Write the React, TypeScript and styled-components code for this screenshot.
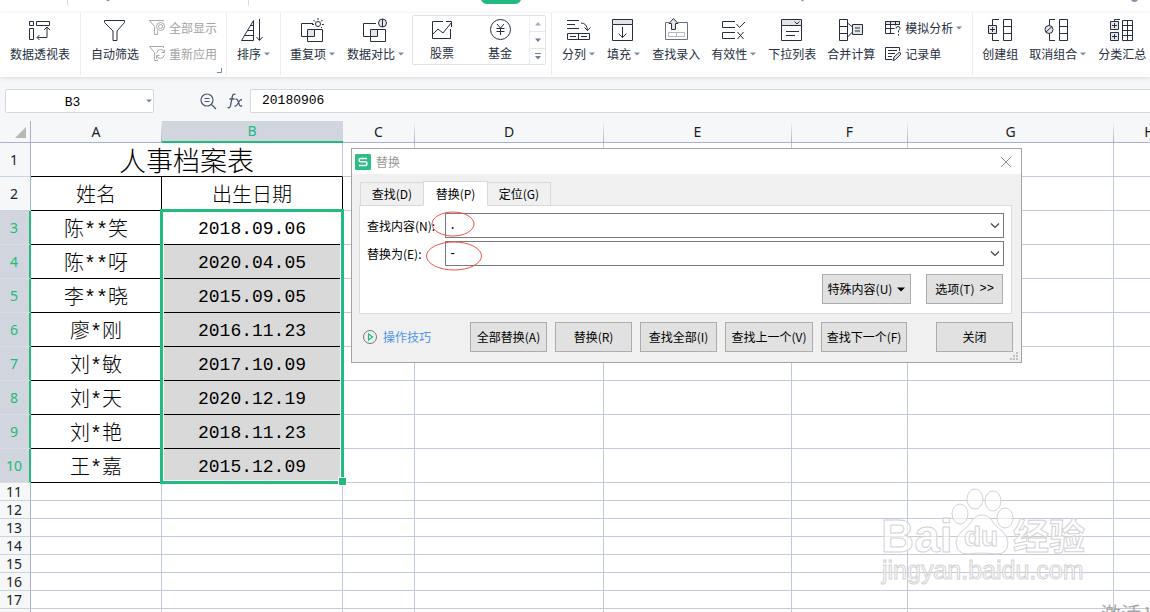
import React from "react";
import styled, { createGlobalStyle, css } from "styled-components";

const ui = `"Noto Sans CJK SC", "Noto Sans", sans-serif`;
const song = `"Liberation Mono", "Noto Sans CJK SC", monospace`;
const green = "#21ba7f";
const ink = "#262f40";
const gridLine = "#c3c9dd";
const headLine = "#a9b2cc";

const GlobalStyle = createGlobalStyle`
  * { box-sizing: border-box; }
  body { margin: 0; background: #fff; font: 12px/16px ${ui}; color: ${ink}; overflow: hidden; }
  button, input { font: inherit; color: inherit; margin: 0; padding: 0; }
  svg { display: block; overflow: visible; flex: none; }
`;

const Page = styled.div`
  position: relative;
  display: flex;
  flex-direction: column;
  height: 100vh;
  overflow: hidden;
`;

/* ---------- ribbon ---------- */

const TabStrip = styled.div`
  flex: none;
  height: 13px;
  background: #fff;
`;

const Ribbon = styled.div`
  flex: none;
  display: flex;
  height: 64px;
  padding-bottom: 2px;
  background: #fff;
  position: relative;
  z-index: 1;
  box-shadow: 0 1px 4px #d9dbde;
`;

const Group = styled.div<{ $gallery?: boolean; $open?: boolean }>`
  position: relative;
  flex: none;
  display: flex;
  gap: 11px;
  padding: ${(p) => (p.$gallery ? "2px 5px 0 7px" : p.$open ? "5px 0 0 9px" : "5px 9px 0 10px")};
  border-right: ${(p) => (p.$open ? "0" : "1px solid #ebedf0")};
  &:first-child { padding-right: 10px; }
`;

const ToolButton = styled.button<{ $wide?: boolean }>`
  flex: none;
  display: flex;
  flex-direction: column;
  align-items: center;
  gap: 4px;
  width: ${(p) => (p.$wide ? "58px" : "auto")};
  border: 0;
  background: none;
  height: 44px;
  white-space: nowrap;
`;

const ToolLabel = styled.span`
  display: flex;
  align-items: center;
`;

const Stack = styled.div`
  display: flex;
  flex-direction: column;
  gap: 10px;
  padding-top: 2px;
  margin-left: -1px;
`;

const SmallButton = styled.button<{ $off?: boolean }>`
  display: flex;
  align-items: center;
  gap: 4px;
  height: 16px;
  border: 0;
  background: none;
  white-space: nowrap;
  color: ${(p) => (p.$off ? "#a3a3a3" : ink)};
`;

const Corner = styled.svg`
  position: absolute;
  right: 4px;
  bottom: 2px;
`;

const Gallery = styled.div`
  display: flex;
  height: 50px;
  border: 1px solid #dfe2ea;
  border-radius: 2px;
`;

const GalleryItems = styled.div`
  display: flex;
  padding-top: 1px;
`;

const Scroller = styled.div`
  display: flex;
  flex-direction: column;
  width: 16px;
  border-left: 1px solid #eceef2;
`;

const ScrollButton = styled.button`
  flex: 1;
  display: flex;
  align-items: center;
  justify-content: center;
  border: 0;
  background: none;
  & + & { border-top: 1px solid #e4e6ec; }
`;

const CaretSvg = styled.svg`
  margin-left: 3px;
  margin-right: 1px;
`;

const Caret = () => (
  <CaretSvg width="6" height="4" viewBox="0 0 6 4">
    <path d="M0 0.5H6L3 3.5Z" fill="#7c8aa5" />
  </CaretSvg>
);

const Ico = ({ children, size = 24, color = ink }: { children: React.ReactNode; size?: number; color?: string }) => (
  <svg width={size} height={size} viewBox={`0 0 ${size} ${size}`} fill="none" stroke={color} strokeWidth="1">
    {children}
  </svg>
);

const shade = "#e3e5e9";

const icons = {
  pivot: (
    <Ico>
      <path d="M1.5 3.5h4v4h-4zM8.5 3.5h13v4h-13zM1.5 10.5h4v11h-4z" />
      <path d="M9.5 19.5h9.5v-10M11.5 17l-2.5 2.5 2.5 2.5M16 12l3-3 3 3" />
    </Ico>
  ),
  funnel: (
    <Ico>
      <path d="M1.5 2.5h20v2l-7.500 8.500v9.500h-4v-9.500L1.500 4.500z" />
    </Ico>
  ),
  sort: (
    <Ico>
      <path d="M11.500 2.500L-.5 22.500h12zM8.500 7.500h3M5.500 12.500h6M2.500 17.500h9M17.500 1v21M14.500 19l3 3.500 3-3.500" />
    </Ico>
  ),
  duplicate: (
    <Ico>
      <path d="M6.500 11.500h7v7h-7z" fill={shade} stroke="none" />
      <path d="M12 5.500H.5v13h13V11M6.500 11.500h15v12h-15z" />
      <circle cx="17" cy="6" r="2.500" />
      <path d="M17 0v2M12.500 2l1.500 1.500M21.500 2L20 3.500M11 6.500h2M21 6.500h2M20 9l1 1" />
    </Ico>
  ),
  compare: (
    <Ico>
      <path d="M6.500 11.500h7v7h-7z" fill={shade} stroke="none" />
      <path d="M12 5.500H-.5v13h14V11M6.500 11.500h15v12h-15z" />
      <circle cx="18.500" cy="5" r="4" fill={shade} />
      <path d="M18.500 1v8" />
    </Ico>
  ),
  stock: (
    <Ico>
      <path d="M13 4.500H2.500v17h18V12" />
      <path d="M3 17l5-5 5 4L21.500 5.500M16 4.500h5.500V10" />
    </Ico>
  ),
  fund: (
    <Ico>
      <circle cx="12.500" cy="12.500" r="10" />
      <path d="M9 7l3.500 4L16 7M12.500 11v7M8.500 11.500h8M8.500 14.500h8" />
    </Ico>
  ),
  split: (
    <Ico>
      <path d="M0 2.500h12M0 6.500h8M0 10.500h12M.5 15.500h22v6H.5zM11.500 15.500v6M3 18.500h6M14 18.500h6" />
      <path d="M14 5q6 0 6.500 7.500M17.500 9.500l3 3 3-3" />
    </Ico>
  ),
  fill: (
    <Ico>
      <path d="M.5 1.500h20v5H.5z" fill={shade} />
      <path d="M.5 6.500v16h20v-16M10.500 9v10.500M6.500 15.500l4 4 4-4" />
    </Ico>
  ),
  lookup: (
    <Ico>
      <path d="M5 4.500H1.500v17h22v-17H14" stroke="#6c7280" />
      <path d="M4.500 14.500h16v4h-16zM12.500 14.500v4" stroke="#b4b8bf" />
      <path d="M9.500 .5L14 5.500h-2.500v6h-4v-6H5z" fill={shade} />
    </Ico>
  ),
  valid: (
    <Ico>
      <path d="M13 3.500H.5v6H13M13 14.500H.5v6H13" />
      <path d="M14.500 6l3 3.500L23 4M15.500 14l6 7M21.500 14l-6 7" />
    </Ico>
  ),
  list: (
    <Ico>
      <path d="M1.500 1.500h20v6h-20z" fill={shade} />
      <path d="M1.500 7.500v15h20v-15M14.500 3.500l2.500 2.500 2.500-2.500M6 13.500h13M6 17.500h9" />
    </Ico>
  ),
  consolidate: (
    <Ico>
      <path d="M.5 1.500h8v21h-8zM.5 8.500h8M.5 15.500h8M8.500 5l5 4M8.500 19l5-5" />
      <path d="M13.500 6.500h10v10h-10z" fill={shade} />
      <path d="M16 10h5M16 13h5" />
    </Ico>
  ),
  group: (
    <Ico>
      <path d="M11 1.500H4.500V7M4.500 15v7.500H11M15.500 1.500h8v21h-8zM15.500 8.500h8M15.500 15.500h8" />
      <path d="M.5 7.500h8v8h-8z" fill={shade} />
      <path d="M4.500 9v5M2 11.500h5" />
    </Ico>
  ),
  ungroup: (
    <Ico>
      <path d="M9 1.500H3.500V7M3.500 15v7.500H9M13.500 1.500h8v21h-8zM13.500 8.500h8M13.500 15.500h8" />
      <circle cx="3" cy="11.500" r="4" fill={shade} />
      <path d="M0 14l6-5.500" />
    </Ico>
  ),
  subtotal: (
    <Ico>
      <path d="M10 1.500H4.500V4M12.500 2.500h10v20h-10zM17.500 2.500v20M12.500 7.500h10M12.500 12.500h10M12.500 17.500h10" />
      <path d="M.5 3.500h8v8h-8zM.5 14.500h8v8h-8z" fill={shade} />
      <path d="M4.500 5v5M2 7.500h5M4.500 16v5M2 18.500h5" />
    </Ico>
  ),
  showAll: (
    <Ico size={16} color="#a9a9a9">
      <path d="M10 .5H.5L5.500 6.500v8h3v-4M.5 .5h14v1" />
      <circle cx="11.500" cy="6.500" r="4" fill="#fff" />
      <circle cx="11.500" cy="6.500" r="2" />
    </Ico>
  ),
  reapply: (
    <Ico size={16} color="#a9a9a9">
      <path d="M14.500 2V.5H.5L5.500 6.500v8h3v-1" />
      <path d="M7.500 7.500q1-4 4-4t4 3M15.500 3.500v3h-3M15.500 8.500q-1 4-4 4t-4-3M7.500 12.500v-3h3" />
    </Ico>
  ),
  whatIf: (
    <Ico size={16}>
      <path d="M.5 1.500h14v3H.5z" fill={shade} />
      <path d="M9.500 13.500h-9v-12M.5 8.500h9M5.500 1.500v12M10.500 1.500v4M14.500 1.500V5" />
      <path d="M11 8.500q0-2 2-2t2 2q0 1-1.500 2v2M13.500 14v1.500" />
    </Ico>
  ),
  form: (
    <Ico size={16}>
      <path d="M14.500 5V1.500H.5v12H7M3 4.500h9M3 7.500h7M3 10.500h4" />
      <path d="M8 14.500l1-3.500 5.500-5 1.500 2-5.500 5.500z" fill={shade} />
    </Ico>
  ),
};

type IconName = keyof typeof icons;

const Tool = ({ icon, label, menu, wide }: { icon: IconName; label: string; menu?: boolean; wide?: boolean }) => (
  <ToolButton type="button" $wide={wide}>
    {icons[icon]}
    <ToolLabel>
      {label}
      {menu && <Caret />}
    </ToolLabel>
  </ToolButton>
);

const SmallTool = ({ icon, label, menu, off }: { icon: IconName; label: string; menu?: boolean; off?: boolean }) => (
  <SmallButton type="button" $off={off} disabled={off}>
    {icons[icon]}
    <ToolLabel>
      {label}
      {menu && <Caret />}
    </ToolLabel>
  </SmallButton>
);

/* ---------- formula bar ---------- */

const FormulaBar = styled.div`
  flex: none;
  display: flex;
  align-items: flex-start;
  height: 44px;
  padding: 12px 0 0 5px;
  background: #f5f7f9;
`;

const NameBox = styled.div`
  flex: none;
  display: flex;
  align-items: center;
  width: 149px;
  height: 24px;
  background: #fff;
  border: 1px solid #d5d8e0;
  border-radius: 2px;
`;

const CellInput = styled.input`
  flex: 1;
  min-width: 0;
  border: 0;
  outline: 0;
  background: none;
  color: #000;
  font: 13px/20px ${song};
`;

const NameInput = styled(CellInput)`
  padding: 3px 4px 0 0;
  text-align: center;
`;

const BareButton = styled.button`
  display: flex;
  align-items: center;
  border: 0;
  background: none;
`;

const FxTools = styled.div`
  flex: none;
  display: flex;
  align-items: center;
  gap: 10px;
  height: 24px;
  width: 96px;
  padding-left: 46px;
`;

const FormulaField = styled.div`
  flex: 1;
  display: flex;
  height: 24px;
  padding-left: 11px;
  background: #fff;
  border: 1px solid #d5d8e0;
  border-right: 0;
  border-radius: 2px 0 0 2px;
`;

/* ---------- sheet ---------- */

const Sheet = styled.table`
  flex: none;
  table-layout: fixed;
  width: 100%;
  min-width: 1186px;
  border-collapse: separate;
  border-spacing: 0;
`;

const headBase = css`
  padding: 0;
  font: 14px/16px "Noto Sans", sans-serif;
  text-align: center;
  color: #1b1f27;
`;

const ColHead = styled.th<{ $on?: boolean }>`
  ${headBase}
  padding-right: 1px;
  height: 22px;
  background: ${(p) => (p.$on ? "#d1d5dd" : `linear-gradient(to bottom, #f5f7f9, ${headLine}) right / 1px 100% no-repeat #f5f7f9`)};
  border-bottom: ${(p) => (p.$on ? `2px solid ${green}` : `1px solid ${headLine}`)};
  color: ${(p) => (p.$on ? green : "#1b1f27")};
`;

const CornerHead = styled.th`
  height: 22px;
  padding: 0 4px 4px 0;
  vertical-align: bottom;
  background: #f5f7f9;
  border-right: 1px solid ${headLine};
  border-bottom: 1px solid ${headLine};
  svg { margin-left: auto; }
`;

const RowHead = styled.th<{ $on?: boolean }>`
  ${headBase}
  padding-right: ${(p) => (p.$on ? "1px" : "2px")};
  background: ${(p) => (p.$on ? "#d1d5dd" : "#f5f7f9")};
  color: ${(p) => (p.$on ? green : "#1b1f27")};
  border-right: ${(p) => (p.$on ? `2px solid ${green}` : `1px solid ${headLine}`)};
  border-bottom: 1px solid ${(p) => (p.$on ? "#dadde6" : "#ccd2e0")};
`;

const Row = styled.tr<{ $tall?: boolean }>`
  height: ${(p) => (p.$tall ? "34px" : "18px")};
`;

const cellText = {
  title: css`padding-top: 8px; font-size: 27px; line-height: 24px;`,
  text: css`padding-top: 6px; font-size: 20px; line-height: 24px;`,
  date: css`padding-top: 2px; font-size: 18px; line-height: 24px;`,
};

const Cell = styled.td<{ $kind?: "title" | "text" | "date"; $sel?: boolean }>`
  padding: 0;
  position: ${(p) => (p.$kind === "date" ? "relative" : "static")};
  border-right: 1px solid ${(p) => (p.$kind && p.$kind !== "title" ? "#000" : gridLine)};
  border-bottom: 1px solid ${(p) => (p.$kind ? "#000" : gridLine)};
  background: ${(p) => (p.$sel ? "#d9d9d9" : "#fff")};
  color: #000;
  text-align: center;
  font-family: ${song};
  font-weight: 300;
  ${(p) => p.$kind && cellText[p.$kind]}
`;

const Selection = styled.div`
  position: absolute;
  z-index: 1;
  top: -2px;
  left: -2px;
  right: -2px;
  height: 275px;
  border: 3px solid ${green};
  box-shadow: inset 0 0 0 1px #fff;
  pointer-events: none;
  &::after {
    content: "";
    position: absolute;
    right: -6px;
    bottom: -5px;
    width: 7px;
    height: 7px;
    border: 1px solid #fff;
    background: ${green};
  }
`;

const people: [string, string][] = [
  ["陈**笑", "2018.09.06"],
  ["陈**呀", "2020.04.05"],
  ["李**晓", "2015.09.05"],
  ["廖*刚", "2016.11.23"],
  ["刘*敏", "2017.10.09"],
  ["刘*天", "2020.12.19"],
  ["刘*艳", "2018.11.23"],
  ["王*嘉", "2015.12.09"],
];

const Blank = ({ from }: { from: number }) => (
  <>
    {Array.from({ length: 8 - from }, (_, i) => (
      <Cell key={i} />
    ))}
  </>
);

/* ---------- replace dialog ---------- */

const Dialog = styled.section`
  position: absolute;
  z-index: 3;
  left: 351px;
  top: 148px;
  width: 671px;
  background: #f0f0f0;
  border: 1px solid #a3a3a3;
  color: #000;
`;

const TitleBar = styled.header`
  display: flex;
  align-items: center;
  gap: 5px;
  height: 25px;
  padding: 0 9px 0 3px;
  background: #fff;
  color: #999;
`;

const Spacer = styled.span`
  flex: 1;
`;

const Tabs = styled.div`
  display: flex;
  align-items: flex-end;
  padding: 7px 0 0 8px;
  position: relative;
  z-index: 1;
  margin-bottom: -1px;
`;

const Tab = styled.button<{ $active?: boolean }>`
  width: ${(p) => (p.$active ? "65px" : "63px")};
  height: ${(p) => (p.$active ? "25px" : "24px")};
  background: ${(p) => (p.$active ? "#fff" : "#f0f0f0")};
  border: 1px solid #d9d9d9;
  border-bottom-color: ${(p) => (p.$active ? "#fff" : "#d9d9d9")};
  ${(p) => !p.$active && css`&:first-child { border-right: 0; } &:last-child { border-left: 0; }`}
`;

const Panel = styled.div`
  margin: 0 9px 0 7px;
  padding: 7px 7px 9px 7px;
  background: #fff;
  border: 1px solid #dcdcdc;
`;

const Field = styled.div`
  display: flex;
  align-items: center;
  margin-bottom: 3px;
  label { width: 78px; flex: none; white-space: nowrap; }
`;

const Combo = styled.div`
  flex: 1;
  display: flex;
  align-items: center;
  height: 25px;
  padding: 0 3px;
  border: 1px solid #7a7a7a;
  background: #fff;
`;

const ComboInput = styled.input`
  flex: 1;
  min-width: 0;
  border: 0;
  outline: 0;
  background: none;
  font-family: ${song};
`;

const Actions = styled.div`
  display: flex;
  justify-content: flex-end;
  gap: 15px;
  padding: 5px 1px 0 0;
`;

const Footer = styled.footer`
  display: flex;
  align-items: center;
  padding: 8px 8px 10px 11px;
  gap: 8px;
`;

const PushButton = styled.button<{ $w: number }>`
  display: flex;
  align-items: center;
  justify-content: center;
  gap: 5px;
  width: ${(p) => p.$w}px;
  height: 30px;
  background: #e1e1e1;
  border: 1px solid #adadad;
  white-space: nowrap;
`;

const Arrows = styled.span`
  font-family: ${song};
`;

const TipsLink = styled.a`
  display: flex;
  align-items: center;
  gap: 6px;
  color: #4d94ee;
  text-decoration: none;
`;

const CloseGap = styled.span`
  width: 13px;
`;

const Grip = styled.svg`
  position: absolute;
  right: 3px;
  bottom: 2px;
`;

const Marks = styled.svg`
  position: absolute;
  z-index: 2;
  left: 70px;
  top: 60px;
  pointer-events: none;
`;

const Chevron = () => (
  <BareButton type="button" aria-label="▾">
    <svg width="10" height="6" viewBox="0 0 10 6" fill="none" stroke="#444" strokeWidth="1.200">
      <path d="M1 .5l4 4 4-4" />
    </svg>
  </BareButton>
);

/* ---------- overlays ---------- */

const TopMarks = styled.svg`
  position: absolute;
  left: 0;
  top: 0;
`;

const Watermark = styled.svg`
  position: absolute;
  z-index: 2;
  left: 860px;
  top: 470px;
  pointer-events: none;
`;

const Activate = styled.div`
  position: absolute;
  z-index: 2;
  left: 1101px;
  top: 602px;
  font-size: 20px;
  line-height: 24px;
  color: #a8a8a8;
  white-space: nowrap;
`;

export default function App() {
  return (
    <Page>
      <GlobalStyle />
      <TabStrip />
      <TopMarks width="1150" height="6" viewBox="0 0 1150 6">
        <path d="M67.500 0v5.500M248.500 0v5.500" stroke="#d6d9e0" />
        <path d="M481 0h40q-2 4-6 4h-28q-4 0-6-4z" fill={green} />
        <path d="M106 0h4l-2 1.500zM801 0h3l-1.500 1.500zM1131 0h7q-1 2-3.500 2t-3.500-2z" fill="#8590ab" />
      </TopMarks>

      <Ribbon>
        <Group>
          <Tool icon="pivot" label="数据透视表" />
        </Group>
        <Group>
          <Tool icon="funnel" label="自动筛选" />
          <Stack>
            <SmallTool icon="showAll" label="全部显示" off />
            <SmallTool icon="reapply" label="重新应用" off />
          </Stack>
          <Corner width="5" height="5" viewBox="0 0 5 5" fill="none" stroke="#7c8aa5">
            <path d="M4.500 0v4.500H0" />
          </Corner>
        </Group>
        <Group>
          <Tool icon="sort" label="排序" menu />
        </Group>
        <Group $open>
          <Tool icon="duplicate" label="重复项" menu />
          <Tool icon="compare" label="数据对比" menu />
        </Group>
        <Group $gallery>
          <Gallery>
            <GalleryItems>
              <Tool icon="stock" label="股票" wide />
              <Tool icon="fund" label="基金" wide />
            </GalleryItems>
            <Scroller>
              <ScrollButton type="button">
                <svg width="6" height="4" viewBox="0 0 6 4"><path d="M0 3.500H6L3 0Z" fill="#a5aec2" /></svg>
              </ScrollButton>
              <ScrollButton type="button">
                <svg width="6" height="4" viewBox="0 0 6 4"><path d="M0 .5H6L3 4Z" fill="#6f7d9b" /></svg>
              </ScrollButton>
              <ScrollButton type="button">
                <svg width="6" height="7" viewBox="0 0 6 7"><path d="M0 0h6v1H0zM0 3H6L3 6.500Z" fill="#6f7d9b" /></svg>
              </ScrollButton>
            </Scroller>
          </Gallery>
        </Group>
        <Group>
          <Tool icon="split" label="分列" menu />
          <Tool icon="fill" label="填充" menu />
          <Tool icon="lookup" label="查找录入" />
          <Tool icon="valid" label="有效性" menu />
          <Tool icon="list" label="下拉列表" />
          <Tool icon="consolidate" label="合并计算" />
          <Stack>
            <SmallTool icon="whatIf" label="模拟分析" menu />
            <SmallTool icon="form" label="记录单" />
          </Stack>
        </Group>
        <Group $open>
          <Tool icon="group" label="创建组" />
          <Tool icon="ungroup" label="取消组合" menu />
          <Tool icon="subtotal" label="分类汇总" />
        </Group>
      </Ribbon>

      <FormulaBar>
        <NameBox>
          <NameInput defaultValue="B3" aria-label="B3" />
          <BareButton type="button"><Caret /></BareButton>
        </NameBox>
        <FxTools>
          <BareButton type="button">
            <svg width="17" height="17" viewBox="0 0 17 17" fill="none" stroke="#4a5670" strokeWidth="1.200">
              <circle cx="7" cy="7" r="6" />
              <path d="M11.500 11.500l4.500 4.500M4.500 5.500h5M4.500 8.500h5" />
            </svg>
          </BareButton>
          <BareButton type="button">
            <svg width="16" height="16" viewBox="0 0 16 16" fill="none" stroke="#4a5670" strokeWidth="1.300">
              <path d="M8.500 1.500Q6 0 5.200 4L3.500 12.500Q3 15.500 .5 14.500M2.500 6h5" />
              <path d="M8.500 6.500q1.500-1 2.300 1l1.700 4.500q1 2 2.500.5M15 6.500q-1.500 0-2.500 1.500L10 12q-1 1.500-2.500 1" />
            </svg>
          </BareButton>
        </FxTools>
        <FormulaField>
          <CellInput defaultValue="20180906" aria-label="fx" />
        </FormulaField>
      </FormulaBar>

      <Sheet>
        <colgroup>
          {[31, 131, 181, 72, 189, 188, 116, 206].map((w, i) => (
            <col key={i} width={w} />
          ))}
          <col />
        </colgroup>
        <thead>
          <tr>
            <CornerHead>
              <svg width="11" height="11" viewBox="0 0 11 11"><path d="M11 0v11H0z" fill="#b8b8b8" /></svg>
            </CornerHead>
            {["A", "B", "C", "D", "E", "F", "G", "H"].map((c) => (
              <ColHead key={c} scope="col" $on={c === "B"}>{c}</ColHead>
            ))}
          </tr>
        </thead>
        <tbody>
          <Row $tall>
            <RowHead scope="row">1</RowHead>
            <Cell $kind="title" colSpan={2}>人事档案表</Cell>
            <Blank from={2} />
          </Row>
          <Row $tall>
            <RowHead scope="row">2</RowHead>
            <Cell $kind="text">姓名</Cell>
            <Cell $kind="text">出生日期</Cell>
            <Blank from={2} />
          </Row>
          {people.map(([name, date], i) => (
            <Row $tall key={i}>
              <RowHead scope="row" $on>{i + 3}</RowHead>
              <Cell $kind="text">{name}</Cell>
              <Cell $kind="date" $sel={i > 0}>
                {date}
                {i === 0 && <Selection />}
              </Cell>
              <Blank from={2} />
            </Row>
          ))}
          {[11, 12, 13, 14, 15, 16, 17].map((n) => (
            <Row key={n}>
              <RowHead scope="row">{n}</RowHead>
              <Blank from={0} />
            </Row>
          ))}
          <Row>
            <RowHead scope="row" />
            <Blank from={0} />
          </Row>
        </tbody>
      </Sheet>

      <Dialog role="dialog" aria-label="替换">
        <TitleBar>
          <svg width="16" height="16" viewBox="0 0 16 16">
            <rect width="16" height="16" rx="1" fill="#2bbf86" />
            <path d="M12 4.500H5.500q-1.500 0-1.500 1.500t1.500 1.800h5q1.500.2 1.500 1.900t-1.500 1.800H4" fill="none" stroke="#fff" strokeWidth="1.500" />
          </svg>
          <span>替换</span>
          <Spacer />
          <BareButton type="button" aria-label="关闭">
            <svg width="12" height="12" viewBox="0 0 12 12" stroke="#8c8c8c"><path d="M1 1l10 10M11 1L1 11" /></svg>
          </BareButton>
        </TitleBar>
        <Tabs role="tablist">
          <Tab type="button" role="tab">查找(D)</Tab>
          <Tab type="button" role="tab" $active>替换(P)</Tab>
          <Tab type="button" role="tab">定位(G)</Tab>
        </Tabs>
        <Panel>
          <Field>
            <label htmlFor="find">查找内容(N):</label>
            <Combo>
              <ComboInput id="find" defaultValue="." />
              <Chevron />
            </Combo>
          </Field>
          <Field>
            <label htmlFor="replace">替换为(E):</label>
            <Combo>
              <ComboInput id="replace" defaultValue="-" />
              <Chevron />
            </Combo>
          </Field>
          <Actions>
            <PushButton type="button" $w={89}>
              特殊内容(U)
              <svg width="8" height="5" viewBox="0 0 8 5"><path d="M0 .5h8L4 4.500z" /></svg>
            </PushButton>
            <PushButton type="button" $w={77}>选项(T) <Arrows>&gt;&gt;</Arrows></PushButton>
          </Actions>
        </Panel>
        <Footer>
          <TipsLink href="#">
            <svg width="14" height="14" viewBox="0 0 14 14" fill="none">
              <circle cx="7" cy="7" r="6.500" stroke="#6d7b80" />
              <path d="M5.500 4v6L9.500 7z" stroke={green} strokeWidth="1.200" />
            </svg>
            操作技巧
          </TipsLink>
          <Spacer />
          <PushButton type="button" $w={77}>全部替换(A)</PushButton>
          <PushButton type="button" $w={77}>替换(R)</PushButton>
          <PushButton type="button" $w={77}>查找全部(I)</PushButton>
          <PushButton type="button" $w={88}>查找上一个(V)</PushButton>
          <PushButton type="button" $w={86}>查找下一个(F)</PushButton>
          <CloseGap />
          <PushButton type="button" $w={77}>关闭</PushButton>
        </Footer>
        <Grip width="8" height="8" viewBox="0 0 8 8">
          <path d="M6 0h2v2H6zM3 3h2v2H3zM6 3h2v2H6zM0 6h2v2H0zM3 6h2v2H3zM6 6h2v2H6z" fill="#bfbfbf" />
        </Grip>
        <Marks width="64" height="64" viewBox="0 0 64 64" fill="none" stroke="#f0504c">
          <ellipse cx="31" cy="15" rx="21" ry="12" />
          <ellipse cx="32" cy="47" rx="27.500" ry="14" />
        </Marks>
      </Dialog>

      <Watermark width="290" height="120" viewBox="0 0 290 120" fill="#fff" fillOpacity="0.6" stroke="#d3d3d3">
        <g fontFamily="Liberation Sans, Noto Sans CJK SC, sans-serif">
          <text x="21" y="82" fontSize="46" fontWeight="700">Bai</text>
          <ellipse cx="100" cy="44" rx="8" ry="10" />
          <ellipse cx="115" cy="29" rx="8" ry="10" />
          <ellipse cx="133" cy="31" rx="8" ry="10" />
          <ellipse cx="145" cy="48" rx="8" ry="10" />
          <path d="M122 45q-7 0-11 7-3 5-9 9-6 5-6 12 1 11 12 11 7-1 14-1t14 1q12 0 12-11 0-7-6-12-6-4-9-9-4-7-11-7z" />
          <text x="104" y="76" fontSize="28" fontWeight="700">du</text>
          <text x="153" y="80" fontSize="36" fontWeight="700">经验</text>
          <text x="22" y="109" fontSize="25">jingyan.baidu.com</text>
        </g>
      </Watermark>
      <Activate>激活 W</Activate>
    </Page>
  );
}
